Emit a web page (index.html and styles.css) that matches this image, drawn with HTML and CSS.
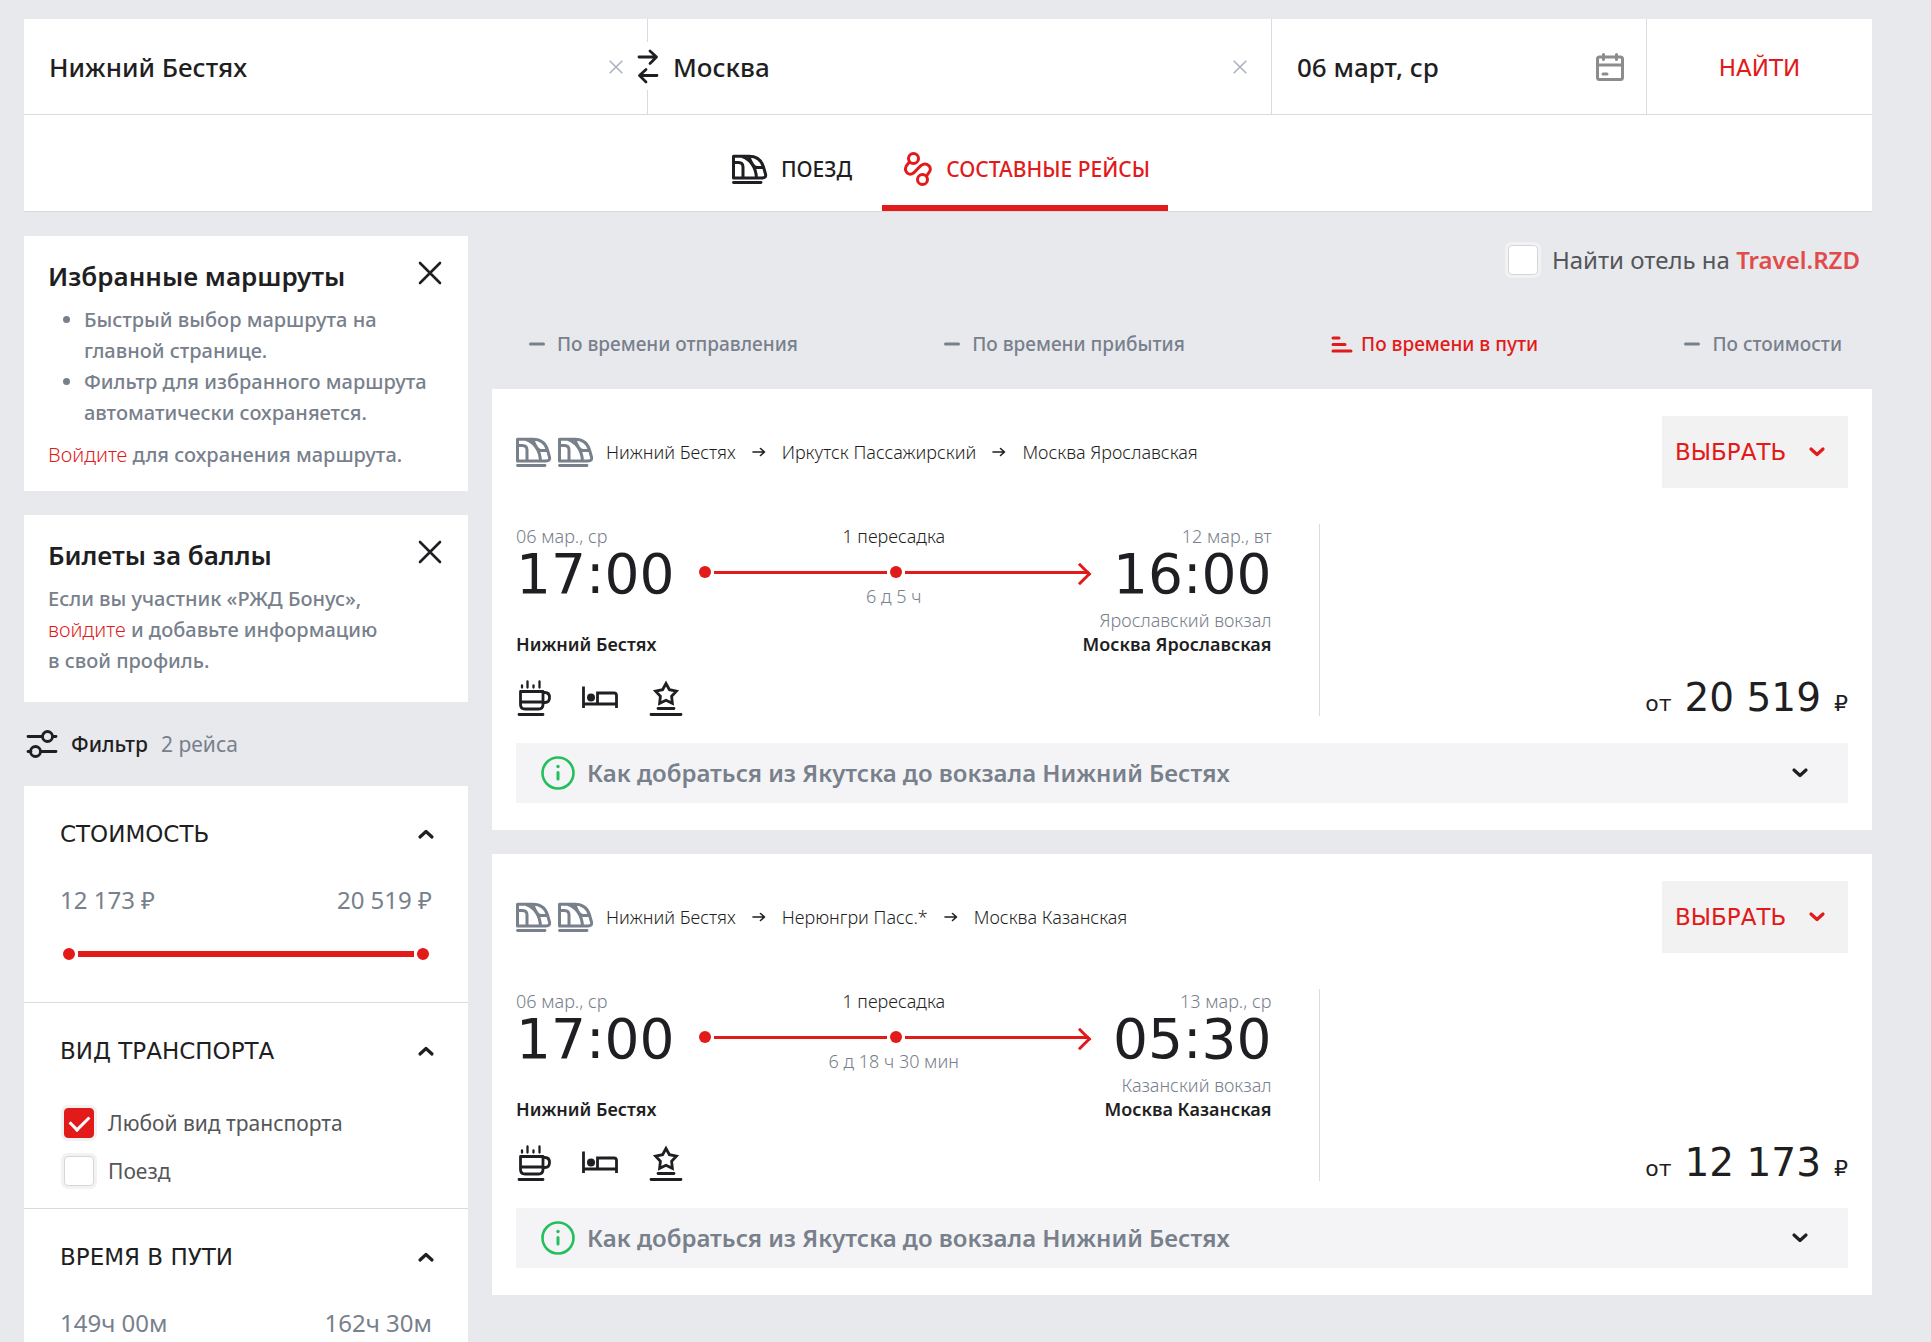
FILE: index.html
```html
<!DOCTYPE html>
<html lang="ru">
<head>
<meta charset="utf-8">
<title>Составные рейсы: Нижний Бестях — Москва</title>
<meta name="viewport" content="width=device-width, initial-scale=1">
<link rel="stylesheet" href="styles.css">
</head>
<body>
<svg class="sprite" aria-hidden="true">
  <symbol id="train" viewBox="0 0 36 30"><g fill="none" stroke="currentColor" stroke-width="3" stroke-linejoin="round"><path d="M1.500 2.300H17C26 2.300 30 8 31.500 13L33.500 20C34.200 22.700 33 24 30 24H1.500Z"/><path d="M1.500 8.500H6.500C9.500 8.500 11 10 11 13V24M10 2.500C18 5 24 13 24.500 24M17 3C19 8 21 13.500 25 13.500H31.500"/></g><path d="M1.500 28.500H29" stroke="currentColor" stroke-width="2.800" stroke-linecap="round"/></symbol>
  <symbol id="chevron" viewBox="0 0 18 12"><path d="M3 3l6 5.500L15 3" fill="none" stroke="currentColor" stroke-width="3.200" stroke-linecap="round" stroke-linejoin="round"/></symbol>
  <symbol id="close" viewBox="0 0 24 24"><path d="M2 2l20 20M22 2L2 22" fill="none" stroke="currentColor" stroke-width="2.600" stroke-linecap="round"/></symbol>
  <symbol id="dash" viewBox="0 0 20 16"><path d="M1.500 8h13" stroke="currentColor" stroke-width="3" stroke-linecap="round"/></symbol>
  <symbol id="route-arrow" viewBox="0 0 14 12"><path d="M1 6h11M8.500 2.500L12.500 6 8.500 9.500" fill="none" stroke="currentColor" stroke-width="1.600" stroke-linecap="round" stroke-linejoin="round"/></symbol>
  <symbol id="cup" viewBox="0 0 36 36"><g fill="none" stroke="currentColor" stroke-width="2.800" stroke-linecap="round" stroke-linejoin="round"><path d="M4.500 11.500H27V24.500Q27 29 22.500 29H9Q4.500 29 4.500 24.500ZM4.500 22H27M27 12.500H29Q33.500 12.500 33.500 17.500T29 22.500H27M3 34.500H27"/><path d="M6 5.500V7.500M11.500 1.500V7.500M17.500 5.500V7.500M23.500 1.500V7.500" stroke-width="2.300"/></g></symbol>
  <symbol id="bed" viewBox="0 0 36 36"><g fill="none" stroke="currentColor" stroke-width="2.800"><path d="M1.500 6.500V28M1.500 24H34.500M34.500 28V15.500Q34.500 13 32 13H15.500V24"/></g><circle cx="9" cy="17.500" r="4" fill="currentColor"/></symbol>
  <symbol id="star" viewBox="0 0 36 36"><path d="M18 3.500l3.400 6.200 7 1.400-4.800 5.200.8 7L18 20.300l-6.400 3 .8-7-4.800-5.200 7-1.400z" fill="none" stroke="currentColor" stroke-width="2.800"/><path d="M10 28.500H26M3 34.500H33" stroke="currentColor" stroke-width="2.800" stroke-linecap="round"/></symbol>
  <symbol id="info" viewBox="0 0 34 34"><circle cx="17" cy="17" r="15.500" fill="none" stroke="currentColor" stroke-width="2.600"/><path d="M17 16.500V23" stroke="currentColor" stroke-width="3" stroke-linecap="round"/><circle cx="17" cy="10.500" r="1.700" fill="currentColor"/></symbol>
</svg>

<div class="page">
  <header class="search">
    <form class="search-form">
      <div class="field">
        <input class="field-input" type="text" aria-label="Откуда" value="Нижний Бестях">
        <button class="clear" type="button" aria-label="Очистить"><svg width="14" height="14"><use href="#close"/></svg></button>
        <button class="swap" type="button" aria-label="Поменять местами"><svg width="24" height="36" viewBox="0 0 24 36" fill="none" stroke="currentColor" stroke-width="2.800" stroke-linecap="round" stroke-linejoin="round"><path d="M3 9H20M14 3L20.500 9 14 15.500M21 27.500H4M10 21.500L3.500 27.500 10 34"/></svg></button>
      </div>
      <div class="field">
        <input class="field-input" type="text" aria-label="Куда" value="Москва">
        <button class="clear" type="button" aria-label="Очистить"><svg width="14" height="14"><use href="#close"/></svg></button>
      </div>
      <div class="field field-date">
        <input class="field-input" type="text" aria-label="Дата" value="06 март, ср">
        <svg class="calendar" width="28" height="28" viewBox="0 0 28 28" fill="none" stroke="currentColor" stroke-width="3" stroke-linecap="round"><rect x="1.500" y="4" width="25" height="22.500" rx="2"/><path d="M2 12H26M7.500 1.500V6.500M20.500 1.500V6.500M7 21H11"/></svg>
      </div>
      <button class="find" type="submit">НАЙТИ</button>
    </form>
    <nav class="tabs">
      <a class="tab" href="#"><svg width="36" height="30"><use href="#train"/></svg>ПОЕЗД</a>
      <a class="tab tab-active" href="#"><svg width="30" height="36" viewBox="0 0 30 36" fill="none" stroke="currentColor" stroke-width="3" stroke-linecap="round"><circle cx="10.500" cy="7.500" r="5"/><circle cx="19.500" cy="28.500" r="5"/><path d="M6.500 11L4 14C0 19 5 26 10.500 22L18 14.500C24 10.500 30 16.500 26 21.500L23.500 25"/></svg>СОСТАВНЫЕ РЕЙСЫ</a>
    </nav>
  </header>

  <div class="layout">
    <aside class="sidebar">
      <section class="card card-routes">
        <div class="card-head"><h2>Избранные маршруты</h2><button class="close" type="button" aria-label="Закрыть"><svg width="24" height="24"><use href="#close"/></svg></button></div>
        <ul><li>Быстрый выбор маршрута на главной странице.</li><li>Фильтр для избранного маршрута автоматически сохраняется.</li></ul>
        <p><a href="#">Войдите</a> для сохранения маршрута.</p>
      </section>
      <section class="card">
        <div class="card-head"><h2>Билеты за баллы</h2><button class="close" type="button" aria-label="Закрыть"><svg width="24" height="24"><use href="#close"/></svg></button></div>
        <p>Если вы участник «РЖД Бонус», <br><a href="#">войдите</a> и добавьте информацию <br>в свой профиль.</p>
      </section>
      <div class="filter-title">
        <svg width="32" height="30" viewBox="0 0 32 30" fill="none" stroke="currentColor" stroke-width="2.800" stroke-linecap="round"><path d="M2 7.500H16M27 7.500H30M2 22.500H5M15 22.500H30"/><circle cx="21.500" cy="7.500" r="5"/><circle cx="9.500" cy="22.500" r="5"/></svg>
        <span>Фильтр</span><span class="muted">2 рейса</span>
      </div>
      <div class="filters">
        <section class="filter">
          <button class="filter-head" type="button">СТОИМОСТЬ<svg class="up" width="18" height="12"><use href="#chevron"/></svg></button>
          <div class="range-values"><span>12 173 ₽</span><span>20 519 ₽</span></div>
          <div class="range"><input type="range" aria-label="Стоимость от" min="12173" max="20519" value="12173"><input type="range" aria-label="Стоимость до" min="12173" max="20519" value="20519"></div>
        </section>
        <section class="filter filter-checks">
          <button class="filter-head" type="button">ВИД ТРАНСПОРТА<svg class="up" width="18" height="12"><use href="#chevron"/></svg></button>
          <label class="check"><input type="checkbox" checked>Любой вид транспорта</label>
          <label class="check"><input type="checkbox">Поезд</label>
        </section>
        <section class="filter">
          <button class="filter-head" type="button">ВРЕМЯ В ПУТИ<svg class="up" width="18" height="12"><use href="#chevron"/></svg></button>
          <div class="range-values"><span>149ч 00м</span><span>162ч 30м</span></div>
        </section>
      </div>
    </aside>

    <main class="results">
      <label class="check hotel"><input type="checkbox"><span>Найти отель на <b>Travel.RZD</b></span></label>
      <div class="sorts">
        <button class="sort" type="button"><svg width="20" height="16"><use href="#dash"/></svg>По времени отправления</button>
        <button class="sort" type="button"><svg width="20" height="16"><use href="#dash"/></svg>По времени прибытия</button>
        <button class="sort sort-active" type="button"><svg width="22" height="18" viewBox="0 0 22 18"><path d="M2 3h6M2 9.500h12M2 16h18" stroke="currentColor" stroke-width="3" stroke-linecap="round"/></svg>По времени в пути</button>
        <button class="sort" type="button"><svg width="20" height="16"><use href="#dash"/></svg>По стоимости</button>
      </div>

      <article class="ticket">
        <div class="ticket-head">
          <div class="route">
            <span class="trains"><svg width="36" height="30"><use href="#train"/></svg><svg width="36" height="30"><use href="#train"/></svg></span>
            <span>Нижний Бестях</span><svg class="next" width="14" height="12"><use href="#route-arrow"/></svg><span>Иркутск Пассажирский</span><svg class="next" width="14" height="12"><use href="#route-arrow"/></svg><span>Москва Ярославская</span>
          </div>
          <button class="choose" type="button">ВЫБРАТЬ<svg width="18" height="12"><use href="#chevron"/></svg></button>
        </div>
        <div class="ticket-body">
          <div class="trip">
            <div class="times">
              <div class="point"><span class="small">06 мар., ср</span><time>17:00</time></div>
              <div class="way"><span>1 пересадка</span><div class="way-line"><i class="dot"></i><i class="bar"></i><i class="dot"></i><i class="bar bar-end"></i></div><span class="small">6 д 5 ч</span></div>
              <div class="point point-end"><span class="small">12 мар., вт</span><time>16:00</time></div>
            </div>
            <div class="stations"><strong>Нижний Бестях</strong><div class="point-end"><span class="small">Ярославский вокзал</span><strong>Москва Ярославская</strong></div></div>
            <div class="services"><svg width="36" height="36"><use href="#cup"/></svg><svg width="36" height="36"><use href="#bed"/></svg><svg width="36" height="36"><use href="#star"/></svg></div>
          </div>
          <div class="price"><span>от</span><b>20 519</b><span>₽</span></div>
        </div>
        <button class="howto" type="button"><svg class="info" width="34" height="34"><use href="#info"/></svg><span>Как добраться из Якутска до вокзала Нижний Бестях</span><svg width="18" height="12"><use href="#chevron"/></svg></button>
      </article>

      <article class="ticket">
        <div class="ticket-head">
          <div class="route">
            <span class="trains"><svg width="36" height="30"><use href="#train"/></svg><svg width="36" height="30"><use href="#train"/></svg></span>
            <span>Нижний Бестях</span><svg class="next" width="14" height="12"><use href="#route-arrow"/></svg><span>Нерюнгри Пасс.*</span><svg class="next" width="14" height="12"><use href="#route-arrow"/></svg><span>Москва Казанская</span>
          </div>
          <button class="choose" type="button">ВЫБРАТЬ<svg width="18" height="12"><use href="#chevron"/></svg></button>
        </div>
        <div class="ticket-body">
          <div class="trip">
            <div class="times">
              <div class="point"><span class="small">06 мар., ср</span><time>17:00</time></div>
              <div class="way"><span>1 пересадка</span><div class="way-line"><i class="dot"></i><i class="bar"></i><i class="dot"></i><i class="bar bar-end"></i></div><span class="small">6 д 18 ч 30 мин</span></div>
              <div class="point point-end"><span class="small">13 мар., ср</span><time>05:30</time></div>
            </div>
            <div class="stations"><strong>Нижний Бестях</strong><div class="point-end"><span class="small">Казанский вокзал</span><strong>Москва Казанская</strong></div></div>
            <div class="services"><svg width="36" height="36"><use href="#cup"/></svg><svg width="36" height="36"><use href="#bed"/></svg><svg width="36" height="36"><use href="#star"/></svg></div>
          </div>
          <div class="price"><span>от</span><b>12 173</b><span>₽</span></div>
        </div>
        <button class="howto" type="button"><svg class="info" width="34" height="34"><use href="#info"/></svg><span>Как добраться из Якутска до вокзала Нижний Бестях</span><svg width="18" height="12"><use href="#chevron"/></svg></button>
      </article>
    </main>
  </div>
</div>
</body>
</html>
```
FILE: styles.css
```css
:root {
  --red: #e21a1a;
  --ink: #1f1f23;
  --muted: #78808c;
  --line: #dadbdf;
  --text: "Noto Sans", "Open Sans", sans-serif;
  --display: "DejaVu Sans", sans-serif;
}

* { box-sizing: border-box; }

body {
  margin: 0;
  background: #e8e9ed;
  color: var(--ink);
  font: 20px/32px var(--text);
}

button, input { font: inherit; color: inherit; }
button { padding: 0; border: 0; background: none; cursor: pointer; }
a { color: var(--red); text-decoration: none; }
svg { display: block; flex: none; }
h2, p, ul { margin: 0; }
.sprite { position: absolute; width: 0; height: 0; }

.page {
  display: flex;
  flex-direction: column;
  min-height: 100vh;
  padding: 19px 59px 0 24px;
}

/* search bar */
.search { background: #fff; border-bottom: 1px solid var(--line); }
.search-form {
  display: grid;
  grid-template-columns: 1fr 1fr 375px 225px;
  height: 96px;
  border-bottom: 1px solid var(--line);
}
.field {
  position: relative;
  display: flex;
  align-items: center;
  padding: 0 24px 0 25px;
  border-right: 1px solid var(--line);
}
.field-date { padding-right: 22px; }
.field-input {
  flex: 1;
  min-width: 0;
  padding: 0;
  border: 0;
  outline: 0;
  background: none;
  font-size: 26px;
  font-weight: 500;
}
.clear { color: #a9afbc; }
.calendar { color: #8c8c8e; }
.swap {
  position: absolute;
  z-index: 1;
  right: -13px;
  top: 23px;
  padding: 6px 0;
  background: #fff;
}
.find { padding-top: 2px; color: var(--red); font: 23px var(--display); }

.tabs { display: flex; justify-content: center; gap: 30px; height: 96px; padding-left: 4px; }
.tab {
  display: flex;
  align-items: center;
  gap: 13px;
  border-bottom: 6px solid transparent;
  padding-top: 18px;
  color: var(--ink);
  font-size: 21px;
  font-weight: 500;
}
.tab-active { padding-left: 21px; padding-right: 18px; color: var(--red); border-color: var(--red); }

.layout {
  flex: 1;
  display: grid;
  grid-template-columns: 444px minmax(0, 1fr);
  gap: 24px;
  padding-top: 24px;
}

/* sidebar */
.sidebar { display: flex; flex-direction: column; }
.card {
  padding: 24px 24px 26px;
  margin-bottom: 24px;
  background: #fff;
  color: var(--muted);
  line-height: 31px;
  font-weight: 500;
}
.card-routes { padding-bottom: 21px; }
.card + .filter-title { margin-top: -24px; }
.card-head { display: flex; justify-content: space-between; align-items: flex-start; margin-bottom: 12px; }
.card-head h2 { color: var(--ink); font-size: 26px; line-height: 32px; font-weight: 600; }
.close { padding: 1px 2px; color: var(--ink); }
.card ul { padding-left: 36px; margin-bottom: 11px; }
.card a { font-weight: 300; }

.filter-title { display: flex; align-items: center; gap: 13px; height: 84px; padding-left: 2px; font-size: 21px; font-weight: 500; }
.muted { color: var(--muted); font-weight: 400; }

.filters { flex: 1; background: #fff; }
.filter { padding: 32px 36px 0; }
.filter:not(:last-child) { border-bottom: 1px solid var(--line); }
.filter-head {
  display: flex;
  justify-content: space-between;
  align-items: center;
  width: 100%;
  font: 23px/32px var(--display);
}
.up { margin-right: -3px; transform: rotate(180deg); }
.range-values { display: flex; justify-content: space-between; padding-top: 34px; font-size: 24px; color: var(--muted); }
.range { display: grid; align-items: center; padding: 29px 0 39px; }
.range::before { content: ""; grid-area: 1 / 1; height: 6px; margin: 0 18px; background: var(--red); }
.range input {
  grid-area: 1 / 1;
  width: 100%;
  height: 18px;
  margin: 0;
  appearance: none;
  background: none;
  pointer-events: none;
}
.range input::-webkit-slider-thumb {
  appearance: none;
  width: 18px;
  height: 18px;
  border: 3px solid #fff;
  border-radius: 50%;
  background: var(--red);
  pointer-events: auto;
}

.check { display: flex; align-items: center; gap: 14px; height: 48px; color: #55565a; font-size: 21px; }
.check input {
  flex: none;
  display: grid;
  place-items: center;
  width: 30px;
  height: 30px;
  margin: 0;
  appearance: none;
  border: 1px solid #d5d6db;
  border-radius: 4px;
  background: #fff;
  box-shadow: 0 0 0 3px #f2f2f3;
}
.check input:checked { border-color: var(--red); background: var(--red); }
.check input:checked::before {
  content: "";
  width: 16px;
  height: 9px;
  margin-bottom: 5px;
  border: solid #fff;
  border-width: 0 0 3px 3px;
  transform: rotate(-45deg);
}
.filter-checks { padding-bottom: 13px; }
.filter-checks .check { padding-left: 4px; }
.filter-checks .filter-head { margin-bottom: 32px; }

/* results */
.hotel { justify-content: flex-end; padding-right: 12px; font-size: 24px; }
.hotel b { color: #e24b4b; font-weight: 600; }
.sorts { display: flex; justify-content: space-between; padding: 44px 30px 29px 37px; }
.sort { display: flex; align-items: center; gap: 8px; color: var(--muted); font-size: 19px; font-weight: 500; }
.sort-active { color: var(--red); }

.ticket { padding: 27px 24px; margin-bottom: 24px; background: #fff; font-size: 18px; line-height: 24px; font-weight: 300; }
.ticket-head { display: flex; justify-content: space-between; align-items: center; margin-bottom: 36px; }
.route { display: flex; align-items: center; gap: 12px; }
.next { margin: 0 4px; }
.trains { display: flex; gap: 6px; color: var(--muted); }
.choose {
  display: flex;
  align-items: center;
  justify-content: space-between;
  width: 186px;
  height: 72px;
  padding: 0 22px 0 13px;
  background: #f2f2f2;
  color: var(--red);
  font: 23px var(--display);
}

.ticket-body { display: grid; grid-template-columns: 61fr 40fr; min-height: 192px; margin-bottom: 27px; }
.trip { display: flex; flex-direction: column; padding-right: 48px; border-right: 1px solid var(--line); }
.times { display: grid; grid-template-columns: auto 1fr auto; gap: 24px; }
.small { color: var(--muted); }
.point, .way, .point-end { display: flex; flex-direction: column; }
.point-end { align-items: flex-end; }
.point time { font: 55px/52px var(--display); }
.way { align-items: center; }
.way-line { display: flex; align-items: center; gap: 3px; width: 100%; height: 24px; margin-top: 12px; }
.dot { width: 12px; height: 12px; border-radius: 50%; background: var(--red); }
.bar { position: relative; flex: 1; height: 3px; background: var(--red); }
.bar-end { flex-grow: 1.06; }
.bar-end::after {
  content: "";
  position: absolute;
  right: 1px;
  top: -5px;
  width: 13px;
  height: 13px;
  border: solid var(--red);
  border-width: 3px 3px 0 0;
  transform: rotate(45deg);
}
.stations { display: flex; justify-content: space-between; align-items: flex-end; }
.stations strong { font-weight: 600; }
.services { display: flex; gap: 30px; margin-top: auto; }
.price {
  display: flex;
  justify-content: flex-end;
  align-items: baseline;
  align-self: end;
  gap: 13px;
  font: 22px/24px var(--display);
}
.price b { font-size: 39px; font-weight: 400; }

.howto {
  display: flex;
  align-items: center;
  gap: 12px;
  width: 100%;
  height: 60px;
  padding: 0 39px 0 25px;
  background: #f4f4f6;
  font-size: 24px;
  font-weight: 600;
  text-align: left;
}
.howto span { flex: 1; color: var(--muted); }
.info { color: #22c05c; }
```
